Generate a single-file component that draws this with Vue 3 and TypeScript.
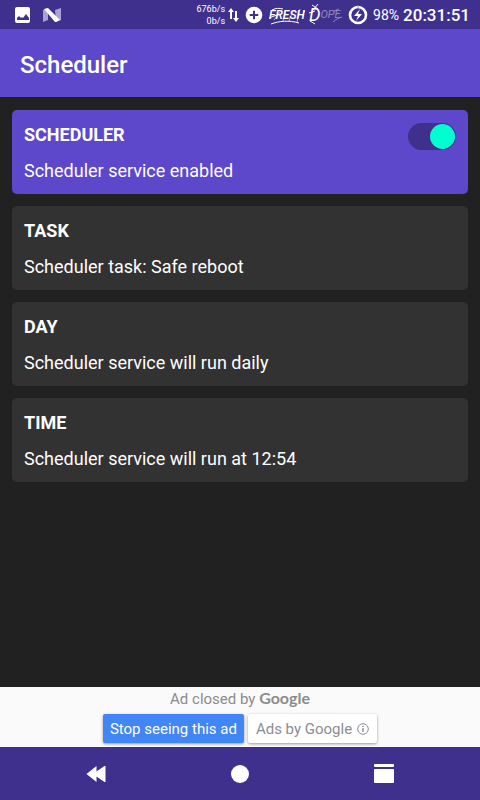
<script setup lang="ts">
import { computed, ref } from 'vue'

interface Setting {
  id: string
  title: string
  summary: string
}

const enabled = ref<boolean>(true)
const serviceSummary = computed<string>(() =>
  enabled.value ? 'Scheduler service enabled' : 'Scheduler service disabled',
)

const settings: Setting[] = [
  { id: 'task', title: 'TASK', summary: 'Scheduler task: Safe reboot' },
  { id: 'day', title: 'DAY', summary: 'Scheduler service will run daily' },
  { id: 'time', title: 'TIME', summary: 'Scheduler service will run at 12:54' },
]
</script>

<template>
  <div class="screen">
    <div class="status">
      <div class="notices">
        <svg class="picture" width="16" height="16" viewBox="0 0 16 16" aria-hidden="true">
          <rect width="15" height="16" rx="2" fill="#fff" />
          <path d="M2 13v-2l2-2 2 2 1-1 1 1 3-4 3 4v2z" fill="#40308d" />
        </svg>
        <svg width="18" height="14" viewBox="0 0 18 14" aria-hidden="true">
          <path d="M0 2 5 0v12l-5 2zM12 2l6-2v12l-5 2z" fill="#aaa2d0" />
          <path d="M1 1 5 0l12 12-4 2h-1z" fill="#fff" />
        </svg>
      </div>
      <div class="indicators">
        <div class="speed">
          <span>676b/s</span>
          <span>0b/s</span>
        </div>
        <svg class="arrows" width="12" height="16" viewBox="0 0 12 16" aria-hidden="true">
          <path d="M3 12V4M8 4v8" stroke="#fff" stroke-width="2" />
          <path d="M0 5 3 1l3 4zM5 11l3 4 3-4z" fill="#fff" />
        </svg>
        <svg class="plus" width="18" height="18" viewBox="0 0 18 18" aria-hidden="true">
          <circle cx="9" cy="9" r="8.3" fill="#fff" />
          <path d="M9 4.7v8.6M4.7 9h8.6" stroke="#40308d" stroke-width="2" />
        </svg>
        <div class="tag">
          <span class="fresh">FRESH</span>
          <svg class="swash" width="38" height="20" viewBox="0 0 38 20" aria-hidden="true">
            <path d="M3 5c4-2 7-2 11-1M0 13l8-3M35 6l-1 5M2 19c8-3 18-4 28-1" />
            <path d="m5 15 6-8M14 16l3-11M20 16l4-11M28 17l3-13" opacity=".6" />
          </svg>
        </div>
        <div class="tag dope">
          <span class="initial">D</span><span class="rest">OPE</span>
          <svg class="swash" width="34" height="22" viewBox="0 0 34 22" aria-hidden="true">
            <path d="m3 0 6 4M9-1 4 5M0 8l6-2M1 16l5 3" />
            <path d="M24 17c3-3 6-4 9-5M25 6l5-2" opacity=".4" />
          </svg>
        </div>
        <svg class="battery" width="20" height="20" viewBox="0 0 20 20" aria-hidden="true">
          <circle cx="10" cy="10" r="8" fill="none" stroke="#fff" stroke-width="2.6" />
          <path d="m12 4-6 7h4l-2 5 6-7h-4z" fill="#fff" />
          <path d="M10 .5V3" stroke="#9d95c8" />
        </svg>
        <span class="percent">98%</span>
        <time class="clock">20:31:51</time>
      </div>
    </div>

    <header class="appbar">
      <h1>Scheduler</h1>
    </header>

    <main class="content">
      <label class="card primary" for="service">
        <span class="row">
          <span class="title">SCHEDULER</span>
          <input id="service" v-model="enabled" class="switch" type="checkbox" />
        </span>
        <span class="summary">{{ serviceSummary }}</span>
      </label>
      <button v-for="item in settings" :key="item.id" class="card" type="button">
        <span class="title">{{ item.title }}</span>
        <span class="summary">{{ item.summary }}</span>
      </button>
    </main>

    <aside class="ad">
      <p class="closed">Ad closed by <span class="brand">Google</span></p>
      <div class="choices">
        <button class="choice stop" type="button">Stop seeing this ad</button>
        <button class="choice" type="button">
          Ads by Google
          <svg width="12" height="12" viewBox="0 0 12 12" aria-hidden="true">
            <circle cx="6" cy="6" r="5.3" fill="none" stroke="#8c8c94" />
            <path d="M6 5v4M6 2.8v1.3" stroke="#8c8c94" stroke-width="1.4" />
          </svg>
        </button>
      </div>
    </aside>

    <nav class="navbar">
      <button type="button" aria-label="Back">
        <svg width="20" height="18" viewBox="0 0 20 18">
          <path d="M.5 9 10.500 1v5.500L18.500 1h1v16h-1l-8-5.500V17z" fill="#fff" />
        </svg>
      </button>
      <button type="button" aria-label="Home">
        <svg width="18" height="18" viewBox="0 0 18 18"><circle cx="9" cy="9" r="9" fill="#fff" /></svg>
      </button>
      <button type="button" aria-label="Recent apps">
        <svg width="20" height="19" viewBox="0 0 20 19">
          <rect width="20" height="3" rx="1" fill="#fff" />
          <rect y="5" width="20" height="14" rx="1" fill="#fff" />
        </svg>
      </button>
    </nav>
  </div>
</template>

<style>
body {
  background: #212121;
}
</style>

<style scoped>
.screen {
  display: flex;
  flex-direction: column;
  min-height: 100vh;
  background: #212121;
  color: #fff;
  font-family: Roboto, 'Liberation Sans', sans-serif;
}

button {
  border: 0;
  font-family: inherit;
  cursor: pointer;
}

svg {
  display: block;
  flex: none;
}

.status {
  display: flex;
  align-items: center;
  justify-content: space-between;
  height: 29px;
  padding: 0 10px 0 15px;
  background: #40308d;
}

.notices,
.indicators {
  display: flex;
  align-items: center;
}

.notices {
  gap: 12px;
}

.speed {
  display: flex;
  flex-direction: column;
  align-items: flex-end;
  font-size: 9px;
  line-height: 12px;
}

.arrows {
  margin-left: 3px;
}

.plus {
  margin-left: 5px;
}

.tag {
  position: relative;
  display: flex;
  align-items: center;
  width: 36px;
  height: 20px;
  margin-left: 6px;
  font-size: 12px;
  font-style: italic;
  white-space: nowrap;
}

.fresh {
  font-weight: 500;
}

.dope {
  width: 34px;
  margin-left: 4px;
}

.initial {
  font-size: 18px;
}

.rest {
  font-size: 11px;
  opacity: 0.4;
}

.swash {
  position: absolute;
  top: 0;
  left: 0;
  overflow: visible;
  fill: none;
  stroke: #fff;
}

.battery {
  margin-left: 5px;
}

.percent {
  margin-left: 5px;
  font-size: 14px;
}

.clock {
  margin-left: 4px;
  font-size: 17px;
  font-weight: 500;
}

.appbar {
  padding: 20px 20px 16px;
  background: #5d48cb;
}

h1 {
  margin: 0;
  font-size: 24px;
  font-weight: 500;
  line-height: 32px;
}

.content {
  display: flex;
  flex: 1;
  flex-direction: column;
  gap: 12px;
  padding: 13px 12px 12px;
}

.card {
  display: flex;
  flex-direction: column;
  gap: 11px;
  padding: 12px 12px 11px;
  border-radius: 5px;
  background: #323232;
  color: #fff;
  font-size: 18px;
  line-height: 25px;
  text-align: left;
}

.primary {
  background: #5d48cb;
}

.row {
  display: flex;
  align-items: center;
  justify-content: space-between;
  height: 25px;
}

.title {
  font-weight: 700;
}

.switch {
  display: flex;
  width: 48px;
  height: 27px;
  margin: 4px 0 0;
  padding: 1px;
  box-sizing: border-box;
  border-radius: 14px;
  background: #40308d;
  appearance: none;
  cursor: pointer;
}

.switch::before {
  width: 25px;
  height: 25px;
  border-radius: 50%;
  background: #a9a3c9;
  content: '';
}

.switch:checked::before {
  margin-left: auto;
  background: #00ffd0;
}

.ad {
  display: flex;
  flex-direction: column;
  align-items: center;
  gap: 4px;
  height: 60px;
  background: #fafafa;
}

.closed {
  margin: 0;
  color: #8c8c8c;
  font-size: 15px;
  line-height: 22px;
}

.brand {
  font-family: Lato, sans-serif;
  font-size: 16px;
  font-weight: 700;
}

.choices {
  display: flex;
  gap: 4px;
}

.choice {
  display: flex;
  align-items: center;
  gap: 5px;
  height: 29px;
  padding: 0 8px;
  border-radius: 2px;
  background: #fff;
  box-shadow: 0 1px 3px rgba(0, 0, 0, 0.4);
  color: #8c8c94;
  font-size: 15px;
}

.stop {
  padding: 0 7px;
  background: #4285f4;
  color: #fff;
}

.navbar {
  display: flex;
  align-items: center;
  justify-content: space-around;
  height: 53px;
  padding: 0 24px;
  background: #40308d;
}

.navbar button {
  padding: 12px;
  background: none;
}
</style>
